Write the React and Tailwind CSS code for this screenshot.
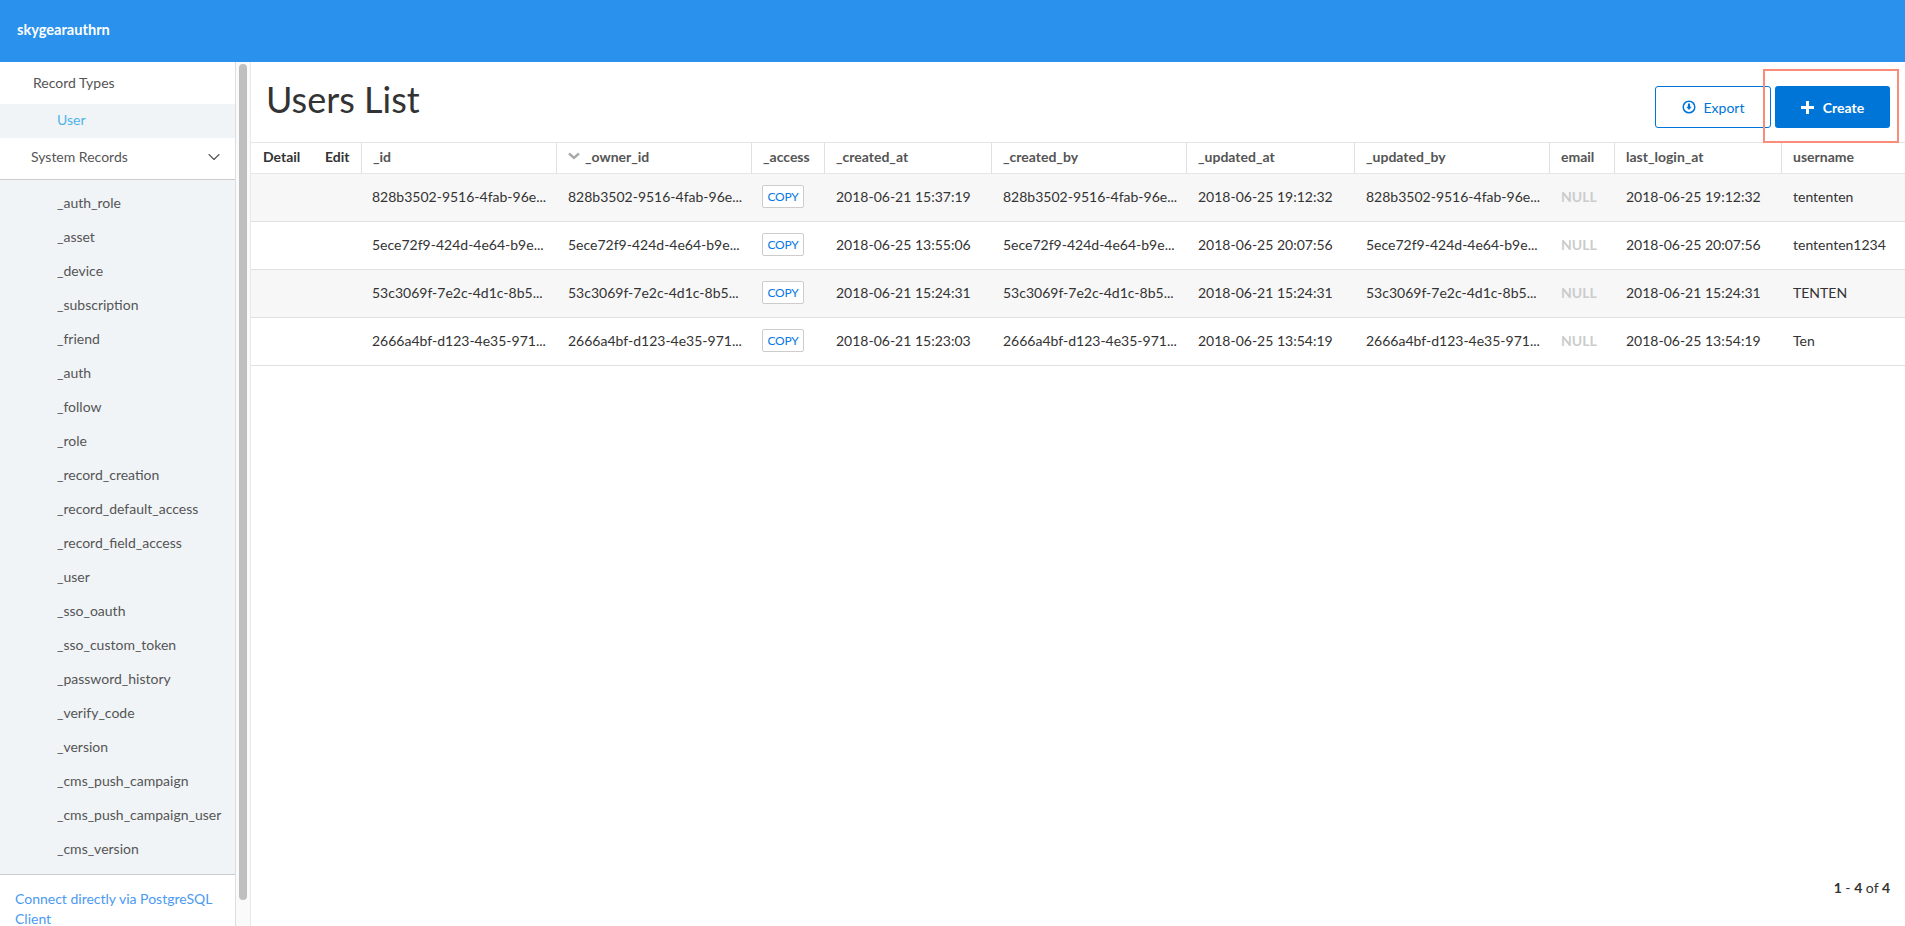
import React from "react";
import { ChevronDown } from "lucide-react";

const systemRecords = [
    "_auth_role", "_asset", "_device", "_subscription", "_friend", "_auth", "_follow", "_role",
    "_record_creation", "_record_default_access", "_record_field_access", "_user", "_sso_oauth",
    "_sso_custom_token", "_password_history", "_verify_code", "_version", "_cms_push_campaign",
    "_cms_push_campaign_user", "_cms_version",
];

const rows = [
    { id: "828b3502-9516-4fab-96e...", created: "2018-06-21 15:37:19", updated: "2018-06-25 19:12:32", username: "tententen" },
    { id: "5ece72f9-424d-4e64-b9e...", created: "2018-06-25 13:55:06", updated: "2018-06-25 20:07:56", username: "tententen1234" },
    { id: "53c3069f-7e2c-4d1c-8b5...", created: "2018-06-21 15:24:31", updated: "2018-06-21 15:24:31", username: "TENTEN" },
    { id: "2666a4bf-d123-4e35-971...", created: "2018-06-21 15:23:03", updated: "2018-06-25 13:54:19", username: "Ten" },
];

const gridCols = "grid grid-cols-[74px_37px_195px_195px_73px_167px_195px_168px_195px_65px_167px_123px]";

const Cell = ({ children, className = "" }) => (
    <div className={"pl-[11px] whitespace-nowrap overflow-hidden " + className}>{children}</div>
);

const HeadCell = ({ children, border = true }) => (
    <Cell className={"flex items-center gap-[5px] pb-[4px] " + (border ? "border-r border-[#e0e0e0]" : "")}>{children}</Cell>
);

const Sidebar = () => (
    <aside className="w-[236px] shrink-0 border-r border-[#dcdfe2] flex flex-col overflow-hidden">
        <div className="h-[42px] shrink-0 flex items-center pb-[2px] pl-[33px] text-[#555] text-[14px]">Record Types</div>
        <div className="h-[34px] shrink-0 flex items-center pb-[3px] pl-[57px] bg-[#f0f4f7] text-[#4fb3e8] text-[14px]">User</div>
        <div className="h-[42px] shrink-0 flex items-center justify-between pb-[4px] pl-[31px] pr-[11px] text-[#555] text-[14px] border-b border-[#ccc]">
            System Records
            <ChevronDown size={20} strokeWidth={1.3} className="text-[#555]" />
        </div>
        <div className="shrink-0 bg-[#f0f4f7] pt-[5px] pb-[9px] border-b border-[#ccc]">
            {systemRecords.map((name) => (
                <div key={name} className="h-[34px] flex items-center pl-[57px] text-[#555] text-[14px]">{name}</div>
            ))}
        </div>
        <a className="shrink-0 pl-[15px] pt-[14px] pr-[10px] text-[#4a9af0] text-[14px] leading-[19.5px]">
            Connect directly via PostgreSQL Client
        </a>
    </aside>
);

const Scrollbar = () => (
    <div className="w-[15px] shrink-0 border-r border-[#e8e8e8] bg-[#fafafa] pt-[2px] pl-[3px]">
        <div className="w-[8px] h-[836px] rounded-[4px] bg-[#bfbfbf]"></div>
    </div>
);

const App = () => {
    return (
        <div className="h-screen flex flex-col overflow-hidden bg-white font-['Lato',sans-serif]">
            <header className="h-[62px] shrink-0 bg-[#2a91ec] flex items-center pl-[17px] pb-[2px] text-white text-[14.6px] font-bold">
                skygearauthrn
            </header>
            <div className="flex-1 flex min-h-0">
                <Sidebar />
                <Scrollbar />
                <main className="flex-1 relative flex flex-col min-w-0">
                    <div className="h-[80px] shrink-0 flex items-start justify-between pl-[15px] pr-[15px]">
                        <h1 className="text-[36px] leading-[44px] mt-[15px] text-[#333]">Users List</h1>
                        <div className="flex gap-[4px] mt-[24px]">
                            <button className="w-[116px] h-[42px] flex items-center justify-center gap-[8px] rounded-[3px] border border-[#0075d8] text-[#0075d8] text-[14px]">
                                <svg width="14" height="14" viewBox="0 0 14 14">
                                    <circle cx="7" cy="7" r="5.8" fill="none" stroke="currentColor" strokeWidth="1.5" />
                                    <path d="M5.9 3.6h2.2v3.2h1.6L7 9.9 4.3 6.8h1.6z" fill="currentColor" />
                                </svg>
                                Export
                            </button>
                            <button className="w-[115px] h-[42px] flex items-center justify-center gap-[9px] rounded-[3px] bg-[#0075d8] text-white text-[14px] font-bold">
                                <svg width="13" height="13" viewBox="0 0 13 13">
                                    <path d="M5 0h3v5h5v3H8v5H5V8H0V5h5z" fill="currentColor" />
                                </svg>
                                Create
                            </button>
                        </div>
                    </div>
                    <div className="absolute left-[1512px] top-[7px] w-[136px] h-[74px] border-2 border-[#fb8c7c]"></div>

                    <div className={gridCols + " h-[32px] shrink-0 items-stretch border-y border-[#e6e6e6] text-[14px] font-bold text-[#555]"}>
                        <Cell className="flex items-center pb-[4px] !pl-[12px] text-[#333]">Detail</Cell>
                        <div className="flex items-center pb-[4px] text-[#333] border-r border-[#e0e0e0] whitespace-nowrap">Edit</div>
                        <HeadCell>_id</HeadCell>
                        <HeadCell>
                            <svg width="12" height="8" viewBox="0 0 12 8">
                                <path d="M1 1.5l5 4.5 5-4.5" fill="none" stroke="#aaa" strokeWidth="2.4" />
                            </svg>
                            _owner_id
                        </HeadCell>
                        <HeadCell>_access</HeadCell>
                        <HeadCell>_created_at</HeadCell>
                        <HeadCell>_created_by</HeadCell>
                        <HeadCell>_updated_at</HeadCell>
                        <HeadCell>_updated_by</HeadCell>
                        <HeadCell>email</HeadCell>
                        <HeadCell>last_login_at</HeadCell>
                        <HeadCell border={false}>username</HeadCell>
                    </div>

                    {rows.map((row, i) => (
                        <div
                            key={row.id}
                            className={gridCols + " h-[48px] shrink-0 items-center pb-[2px] border-b border-[#e0e0e0] text-[14px] text-[#333] " + (i % 2 === 0 ? "bg-[#f7f7f7]" : "bg-white")}
                        >
                            <div></div>
                            <div></div>
                            <Cell className="!pl-[10px]">{row.id}</Cell>
                            <Cell>{row.id}</Cell>
                            <Cell className="!pl-[10px]">
                                <span className="inline-flex items-center justify-center w-[42px] h-[23px] bg-white border border-[#ccc] rounded-[2px] text-[#0a78e0] text-[12px] tracking-[-0.2px]">COPY</span>
                            </Cell>
                            <Cell>{row.created}</Cell>
                            <Cell>{row.id}</Cell>
                            <Cell>{row.updated}</Cell>
                            <Cell>{row.id}</Cell>
                            <Cell className="text-[#ccc] font-bold">NULL</Cell>
                            <Cell>{row.updated}</Cell>
                            <Cell>{row.username}</Cell>
                        </div>
                    ))}

                    <div className="mt-auto flex justify-end pr-[15px] pb-[28px] text-[14px] text-[#333]">
                        <span><b>1</b> - <b>4</b> of <b>4</b></span>
                    </div>
                </main>
            </div>
        </div>
    );
};

export default App;
